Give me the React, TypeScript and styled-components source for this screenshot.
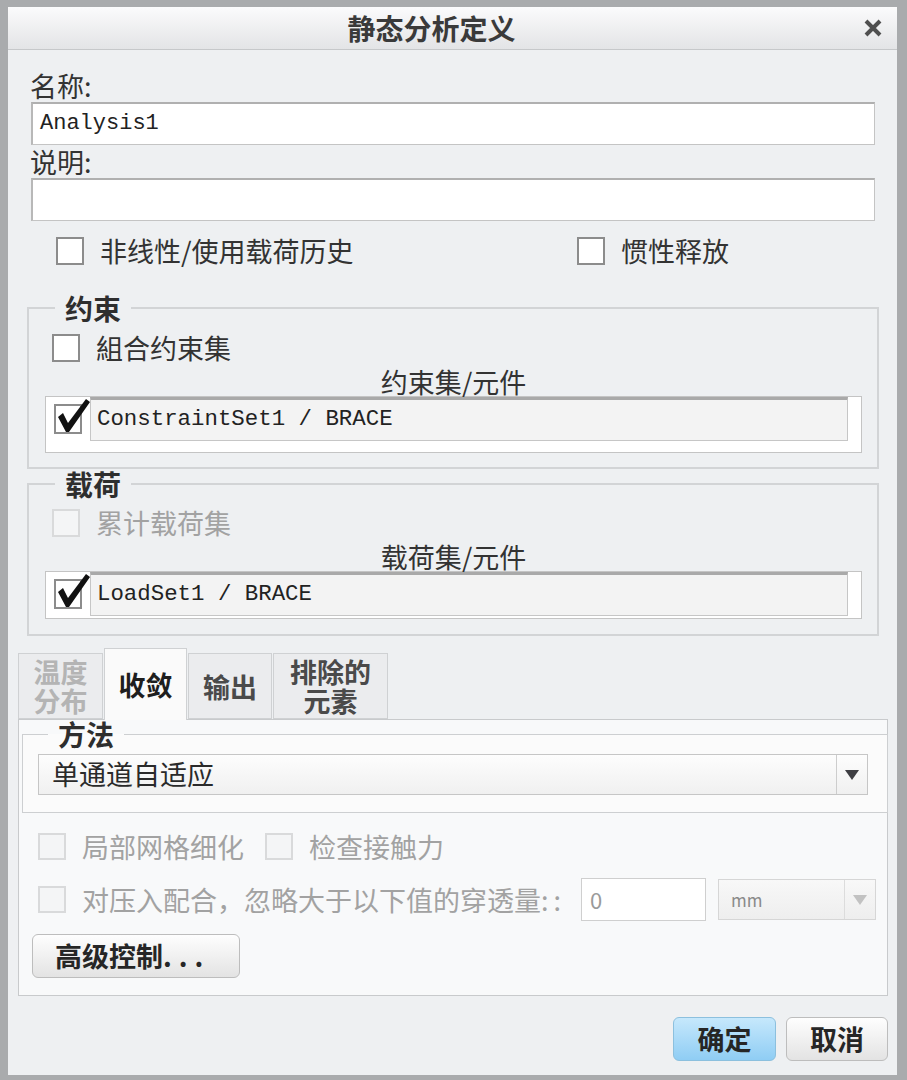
import React from 'react';
import styled, { createGlobalStyle } from 'styled-components';

const FONT = `"Noto Sans CJK SC", "Noto Sans", sans-serif`;
const MONO = `"Liberation Mono", "DejaVu Sans Mono", monospace`;

const COLORS = {
  FRAME: '#a9abad',
  BODY: '#eef0f2',
  PANEL: '#f8f9fa',
  LINE: '#c9cbcd',
  TEXT: '#333333',
  MUTED: '#a2a2a2',
};

const GlobalStyle = createGlobalStyle`
  html, body { margin: 0; padding: 0; background: #ffffff; }
  body { font-family: ${FONT}; color: ${COLORS.TEXT}; }
  * { box-sizing: border-box; }
`;

const Window = styled.div`
  width: 907px;
  height: 1080px;
  display: flex;
  flex-direction: column;
  background: ${COLORS.BODY};
  border-style: solid;
  border-color: ${COLORS.FRAME};
  border-width: 7px 10px 5px 8px;
`;

const TitleBar = styled.div`
  flex: none;
  height: 43px;
  display: flex;
  align-items: center;
  padding: 0 14px 0 14px;
  background: linear-gradient(#fbfbfc, #e3e4e6);
  border-bottom: 1px solid #c6c8ca;
`;

const Title = styled.div`
  flex: 1;
  text-align: center;
  padding-right: 22px;
  font-size: 28px;
  font-weight: bold;
  line-height: 34px;
  color: #3a3a3a;
`;

const Body = styled.div`
  flex: 1;
  display: flex;
  flex-direction: column;
  padding: 22px 9px 0 10px;
`;

const FieldLabel = styled.div<{ $top?: number }>`
  margin: ${(p) => p.$top ?? 0}px 0 0 12px;
  font-size: 27px;
  line-height: 28px;
  height: 28px;
`;

const TextInput = styled.div`
  margin: 2px 13px 0 13px;
  height: 43px;
  background: #ffffff;
  border: 1px solid #c4c4c4;
  border-top: 2px solid #b0b0b0;
  border-left: 2px solid #b8b8b8;
  padding-left: 7px;
  font-family: ${MONO};
  font-size: 22px;
  line-height: 40px;
  color: #222;
`;

const CheckRow = styled.div`
  margin-top: 16px;
  display: grid;
  grid-template-columns: 521px auto;
  padding-left: 38px;
`;

const Option = styled.label<{ $gap?: number; $w?: number }>`
  flex: none;
  display: flex;
  align-items: center;
  gap: ${(p) => p.$gap ?? 16}px;
  width: ${(p) => (p.$w ? `${p.$w}px` : 'auto')};
  height: 28px;
`;

const OptionText = styled.span<{ $disabled?: boolean }>`
  font-size: 27px;
  line-height: 28px;
  white-space: nowrap;
  color: ${(p) => (p.$disabled ? COLORS.MUTED : COLORS.TEXT)};
`;

const Colons = styled.span`
  letter-spacing: 5px;
`;

const Box = styled.span<{ $disabled?: boolean; $h?: number }>`
  position: relative;
  flex: none;
  display: inline-block;
  width: 28px;
  height: ${(p) => p.$h ?? 28}px;
  background: ${(p) => (p.$disabled ? '#f4f5f6' : '#ffffff')};
  border: 2px solid ${(p) => (p.$disabled ? '#d9dadb' : '#8c8c8c')};
`;

const Tick = styled.svg`
  position: absolute;
  left: 1px;
  top: -8px;
  width: 34px;
  height: 38px;
  overflow: visible;
`;

function Checkbox({ disabled, checked, h }: { disabled?: boolean; checked?: boolean; h?: number }) {
  return (
    <Box $disabled={disabled} $h={h}>
      {checked && (
        <Tick viewBox="0 0 34 38">
          <path d="M1 19 L6 15 L11 25 L29 1 L33 4 L12 34 L9 34 Z" fill="#111" />
        </Tick>
      )}
    </Box>
  );
}

const Group = styled.fieldset<{ $top?: number; $pb: number; $pt: number }>`
  margin: ${(p) => p.$top ?? 0}px 9px 0 9px;
  padding: ${(p) => p.$pt}px 15px ${(p) => p.$pb}px 16px;
  border: 2px solid #d2d4d6;
  min-width: 0;
`;

const Legend = styled.legend`
  margin-left: 10px;
  padding: 0 10px;
  font-size: 28px;
  font-weight: bold;
  line-height: 30px;
  color: #2e2e2e;
`;

const GroupCheck = styled.div`
  padding-left: 7px;
`;

const Caption = styled.div`
  margin-top: 6px;
  text-align: center;
  font-size: 27px;
  line-height: 28px;
  height: 28px;
`;

const ListBox = styled.div<{ $h: number }>`
  height: ${(p) => p.$h}px;
  display: flex;
  align-items: flex-start;
  background: #ffffff;
  border: 1px solid #c4c4c4;
  padding-right: 13px;
`;

const ListCheckCell = styled.div`
  flex: none;
  width: 44px;
  padding: 7px 0 0 8px;
`;

const ListTextCell = styled.div`
  flex: 1;
  height: 44px;
  background: #f3f3f3;
  border: 1px solid #c6c6c6;
  border-top: 3px solid #a9a9a9;
  padding-left: 6px;
  font-family: ${MONO};
  font-size: 22.4px;
  line-height: 38px;
  color: #222;
`;

const TabStrip = styled.div`
  margin-top: 12px;
  height: 71px;
  display: flex;
  align-items: flex-start;
`;

const Tab = styled.div<{ $w: number; $active?: boolean; $disabled?: boolean }>`
  position: relative;
  z-index: ${(p) => (p.$active ? 1 : 0)};
  width: ${(p) => p.$w}px;
  height: ${(p) => (p.$active ? 72 : 66)}px;
  margin-top: ${(p) => (p.$active ? 0 : 5)}px;
  margin-right: 1px;
  display: flex;
  align-items: center;
  justify-content: center;
  text-align: center;
  background: ${(p) => (p.$active ? '#fafafa' : '#ebecee')};
  border: 1px solid #cfd1d3;
  border-bottom: ${(p) => (p.$active ? 'none' : '1px solid #cfd1d3')};
  font-size: 27px;
  font-weight: bold;
  line-height: 29px;
  color: ${(p) => (p.$disabled ? '#b4b4b4' : p.$active ? '#1e1e1e' : '#4a4a4a')};
`;

const Panel = styled.div`
  height: 277px;
  display: flex;
  flex-direction: column;
  background: ${COLORS.PANEL};
  border: 1px solid #c8cacc;
`;

const MethodGroup = styled.fieldset`
  margin: -1px -1px 0 3px;
  padding: 5px 19px 17px 15px;
  border: 1px solid #cdcfd1;
  background: #fbfbfb;
  min-width: 0;
`;

const Select = styled.div<{ $disabled?: boolean; $w?: number; $h?: number }>`
  display: flex;
  align-items: stretch;
  width: ${(p) => (p.$w ? `${p.$w}px` : 'auto')};
  height: ${(p) => p.$h ?? 41}px;
  background: ${(p) =>
    p.$disabled ? 'linear-gradient(#f8f8f8, #eeeeee)' : 'linear-gradient(#fdfdfd, #f0f0f0)'};
  border: 1px solid ${(p) => (p.$disabled ? '#d6d6d6' : '#c6c6c6')};
`;

const SelectValue = styled.div<{ $disabled?: boolean }>`
  flex: 1;
  padding-left: ${(p) => (p.$disabled ? 12 : 13)}px;
  font-size: ${(p) => (p.$disabled ? 17 : 27)}px;
  line-height: ${(p) => (p.$disabled ? 39 : 38)}px;
  color: ${(p) => (p.$disabled ? '#8a8a8a' : '#2a2a2a')};
`;

const SelectArrow = styled.div<{ $disabled?: boolean }>`
  flex: none;
  width: 31px;
  display: flex;
  align-items: center;
  justify-content: center;
  border-left: 1px solid ${(p) => (p.$disabled ? '#dcdcdc' : '#cdcdcd')};
  &::after {
    content: '';
    border-left: 7px solid transparent;
    border-right: 7px solid transparent;
    border-top: 10px solid ${(p) => (p.$disabled ? '#c2c2c2' : '#3e3e42')};
  }
`;

const OptionArea = styled.div`
  display: flex;
  flex-direction: column;
  padding-left: 13px;
`;

const OptionRow = styled.div<{ $top: number; $h: number }>`
  margin-top: ${(p) => p.$top}px;
  height: ${(p) => p.$h}px;
  display: flex;
  align-items: center;
  padding-left: 6px;
`;

const Spacer = styled.span<{ $w: number }>`
  flex: none;
  width: ${(p) => p.$w}px;
`;

const SmallInput = styled.div`
  flex: none;
  width: 125px;
  height: 43px;
  background: #ffffff;
  border: 1px solid #cfcfcf;
  padding-left: 8px;
  font-size: 22px;
  line-height: 41px;
  color: #9a9a9a;
`;

const Button = styled.button<{ $primary?: boolean; $w: number }>`
  width: ${(p) => p.$w}px;
  height: 44px;
  padding: 0;
  border-radius: 6px;
  border: 1px solid ${(p) => (p.$primary ? '#8cc0de' : '#bdbdbd')};
  background: ${(p) =>
    p.$primary ? 'linear-gradient(#c6e8fc, #8fcdf4)' : 'linear-gradient(#fefefe, #e3e3e3)'};
  font-family: ${FONT};
  font-size: 27px;
  font-weight: bold;
  line-height: 40px;
  color: #262626;
  text-align: center;
`;

const AdvancedButton = styled(Button)`
  margin-top: 13px;
  text-align: left;
  padding-left: 22px;
`;

const Dots = styled.span`
  letter-spacing: 7px;
`;

const Footer = styled.div`
  margin-top: 21px;
  display: flex;
  justify-content: flex-end;
  gap: 10px;
`;

export default function App() {
  return (
    <>
      <GlobalStyle />
      <Window>
        <TitleBar>
          <Title>静态分析定义</Title>
          <svg width="20" height="20" viewBox="0 0 20 20">
            <path d="M3 3 L17 17 M17 3 L3 17" stroke="#4f4f4f" strokeWidth="4" />
          </svg>
        </TitleBar>
        <Body>
          <FieldLabel>名称:</FieldLabel>
          <TextInput>Analysis1</TextInput>
          <FieldLabel $top={3}>说明:</FieldLabel>
          <TextInput />
          <CheckRow>
            <Option>
              <Checkbox />
              <OptionText>非线性/使用载荷历史</OptionText>
            </Option>
            <Option>
              <Checkbox />
              <OptionText>惯性释放</OptionText>
            </Option>
          </CheckRow>

          <Group $top={28} $pt={11} $pb={14}>
            <Legend>约束</Legend>
            <GroupCheck>
              <Option>
                <Checkbox />
                <OptionText>組合约束集</OptionText>
              </Option>
            </GroupCheck>
            <Caption>约束集/元件</Caption>
            <ListBox $h={57}>
              <ListCheckCell>
                <Checkbox checked h={30} />
              </ListCheckCell>
              <ListTextCell>ConstraintSet1 / BRACE</ListTextCell>
            </ListBox>
          </Group>

          <Group $pt={10} $pb={15}>
            <Legend>载荷</Legend>
            <GroupCheck>
              <Option>
                <Checkbox disabled />
                <OptionText $disabled>累计载荷集</OptionText>
              </Option>
            </GroupCheck>
            <Caption>载荷集/元件</Caption>
            <ListBox $h={48}>
              <ListCheckCell>
                <Checkbox checked h={30} />
              </ListCheckCell>
              <ListTextCell>LoadSet1 / BRACE</ListTextCell>
            </ListBox>
          </Group>

          <TabStrip>
            <Tab $w={85} $disabled>
              温度
              <br />
              分布
            </Tab>
            <Tab $w={83} $active>
              收敛
            </Tab>
            <Tab $w={84}>输出</Tab>
            <Tab $w={115}>
              排除的
              <br />
              元素
            </Tab>
          </TabStrip>

          <Panel>
            <MethodGroup>
              <Legend>方法</Legend>
              <Select>
                <SelectValue>单通道自适应</SelectValue>
                <SelectArrow />
              </Select>
            </MethodGroup>
            <OptionArea>
              <OptionRow $top={20} $h={27}>
                <Option>
                  <Checkbox disabled h={27} />
                  <OptionText $disabled>局部网格细化</OptionText>
                </Option>
                <Spacer $w={21} />
                <Option>
                  <Checkbox disabled h={27} />
                  <OptionText $disabled>检查接触力</OptionText>
                </Option>
              </OptionRow>
              <OptionRow $top={18} $h={43}>
                <Option $w={543}>
                  <Checkbox disabled h={27} />
                  <OptionText $disabled>
                    对压入配合，忽略大于以下值的穿透量<Colons>::</Colons>
                  </OptionText>
                </Option>
                <SmallInput>0</SmallInput>
                <Spacer $w={12} />
                <Select $disabled $w={158} $h={41}>
                  <SelectValue $disabled>mm</SelectValue>
                  <SelectArrow $disabled />
                </Select>
              </OptionRow>
              <AdvancedButton $w={208}>
                高级控制<Dots>...</Dots>
              </AdvancedButton>
            </OptionArea>
          </Panel>

          <Footer>
            <Button $primary $w={103}>
              确定
            </Button>
            <Button $w={102}>取消</Button>
          </Footer>
        </Body>
      </Window>
    </>
  );
}
